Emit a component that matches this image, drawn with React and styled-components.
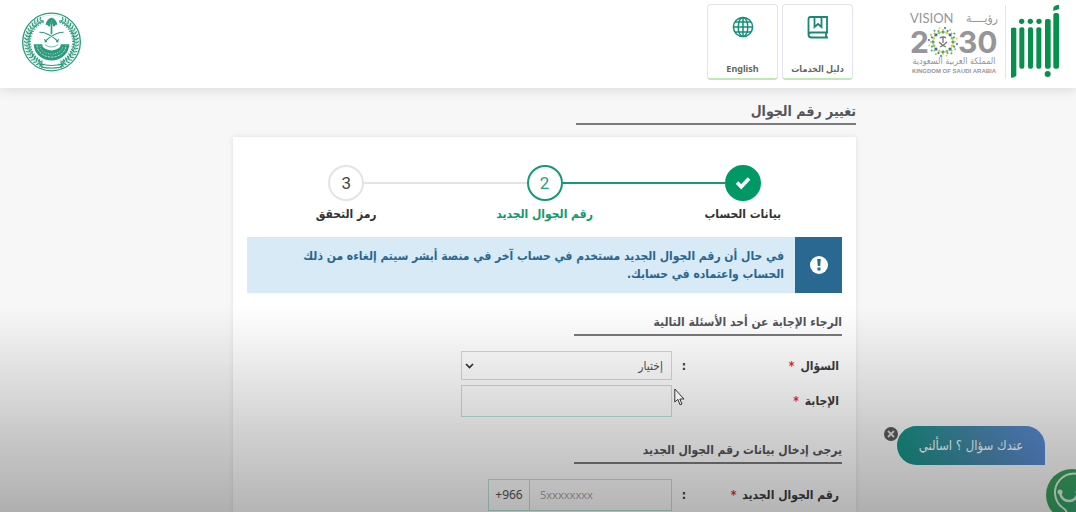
import React from "react";
import styled, { createGlobalStyle } from "styled-components";

const arabic = `"DejaVu Sans Condensed", "DejaVu Sans", sans-serif`;

const GlobalStyle = createGlobalStyle`
  *, *::before, *::after { box-sizing: border-box; }
  body {
    margin: 0;
    background: #f7f7f8;
    color: #3a3a3e;
    font-family: ${arabic};
    font-size: 12px;
    line-height: 18px;
  }
  button, input, select { font-family: inherit; }
`;

const Page = styled.div`
  display: flex;
  flex-direction: column;
  min-height: 100vh;
`;

const Header = styled.header`
  display: flex;
  align-items: flex-start;
  height: 88px;
  padding: 4px 16px 0 22px;
  background: #fff;
  box-shadow: 0 2px 12px rgba(0, 0, 0, 0.12);
  z-index: 1;
`;

const Brand = styled.a`
  display: flex;
  align-items: center;
  gap: 4px;
`;

const BrandDivider = styled.span`
  width: 1px;
  height: 74px;
  margin-inline-end: 2px;
  background: #e3e3e8;
`;

const Tiles = styled.nav`
  display: flex;
  gap: 4px;
  margin-inline-start: 56px;
`;

const Tile = styled.a`
  display: flex;
  flex-direction: column;
  align-items: center;
  justify-content: space-between;
  width: 71px;
  height: 76px;
  padding: 11px 0 1px;
  border: 1px solid #e4e4f0;
  border-bottom: 2px solid #bfe8b4;
  border-radius: 4px;
  color: #666;
  font: bold 9px/16px "Noto Sans", ${arabic};
  text-decoration: none;
  white-space: nowrap;
`;

const EmblemLink = styled.a`
  margin-inline-start: auto;
  padding-top: 8px;
`;

const Main = styled.main`
  display: flex;
  flex: 1;
  flex-direction: column;
  width: 100%;
  max-width: 636px;
  margin: 0 auto;
  padding: 14px 0 0 13px;
`;

const Heading = styled.h2`
  width: 45%;
  margin: 0;
  padding-bottom: 3px;
  border-bottom: 2px solid #7b7b7e;
  color: #55555a;
  font-size: ${(p) => (p.$large ? "14px" : "12px")};
  line-height: 18px;
  white-space: nowrap;
`;

const Card = styled.form`
  flex: 1;
  margin-top: 12px;
  padding: 28px 14px 0;
  background: #fff;
  box-shadow: 0 0 5px rgba(0, 0, 0, 0.1);
`;

const Steps = styled.ol`
  display: grid;
  grid-template-columns: repeat(3, 1fr);
  margin: 0;
  padding: 0;
  list-style: none;
`;

const stepColor = { done: "#009966", current: "#169a75", next: "#e4e4e4" };

const Step = styled.li`
  position: relative;
  display: flex;
  flex-direction: column;
  align-items: center;
  gap: 4px;
  color: ${(p) => (p.$state === "current" ? "#109a6c" : "#333")};
  font-weight: bold;

  &:not(:first-child)::before {
    content: "";
    position: absolute;
    top: 17px;
    right: calc(-50% + 18px);
    left: calc(50% + 18px);
    height: 2px;
    background: ${(p) => stepColor[p.$state]};
  }
`;

const StepMark = styled.span`
  display: flex;
  align-items: center;
  justify-content: center;
  width: 36px;
  height: 36px;
  border: 2px solid ${(p) => stepColor[p.$state]};
  border-radius: 50%;
  background: ${(p) => (p.$state === "done" ? "#009966" : "#fff")};
  color: ${(p) => (p.$state === "current" ? "#2b9d7d" : "#444")};
  font: 17px/20px Roboto, sans-serif;
`;

const Notice = styled.div`
  display: flex;
  margin-top: 14px;
  min-height: 56px;
  background: #d8eaf5;
  color: #2a6790;
  font-weight: bold;
`;

const NoticeIcon = styled.span`
  display: flex;
  flex: none;
  align-items: center;
  justify-content: center;
  width: 47px;
  background: #296890;
`;

const NoticeText = styled.p`
  flex: 1;
  margin: 0;
  padding: 10px 11px;
`;

const Section = styled.fieldset`
  display: flex;
  flex-direction: column;
  gap: 5px;
  min-width: 0;
  margin: ${(p) => (p.$spaced ? "24px" : "20px")} 0 0;
  padding: 0;
  border: 0;

  ${Heading} { margin-bottom: 10px; }
`;

const Row = styled.div`
  display: flex;
  align-items: center;
`;

const Label = styled.label`
  width: 156px;
  padding-inline-start: 3px;
  font-weight: bold;
  color: #3c3c3e;
`;

const Required = styled.span`
  margin-inline-start: 6px;
  color: #f0262c;
`;

const Colon = styled.span`
  width: 14px;
  font-weight: bold;
`;

const fieldBox = `
  border: 1px solid #bbe4dd;
  border-radius: 0;
  background: transparent;
  color: #555;
  font-size: 12px;
  outline: none;
`;

const SelectWrap = styled.div`
  position: relative;
  width: 211px;

  svg {
    position: absolute;
    top: 11px;
    left: 4px;
    pointer-events: none;
  }
`;

const Select = styled.select`
  ${fieldBox}
  display: block;
  width: 100%;
  height: 29px;
  padding: 0 8px;
  appearance: none;
`;

const Input = styled.input`
  ${fieldBox}
  width: 211px;
  height: 32px;
  padding: 0 8px;
`;

const PhoneGroup = styled.div`
  ${fieldBox}
  display: flex;
  width: 184px;
  height: 32px;
`;

const PhoneInput = styled.input`
  flex: 1;
  min-width: 0;
  padding: 0 10px;
  border: 0;
  background: transparent;
  font: 11px/18px "Noto Sans", sans-serif;
  outline: none;

  &::placeholder { color: #aaa; opacity: 1; }
`;

const DialCode = styled.span`
  display: flex;
  align-items: center;
  justify-content: center;
  width: 41px;
  border-right: 1px solid #bbe4dd;
  font: 12px/18px "Noto Sans", sans-serif;
`;

const Chat = styled.aside`
  position: fixed;
  right: 31px;
  bottom: 47px;
  z-index: 2;
`;

const ChatBubble = styled.button`
  width: 148px;
  height: 39px;
  padding: 0;
  border: 0;
  border-radius: 20px 20px 0 20px;
  background: linear-gradient(80deg, #149382, #4888ab 55%, #5a8bd6);
  color: #f4fcff;
  font-size: 13px;
`;

const ChatClose = styled.button`
  position: absolute;
  top: 1px;
  left: -13px;
  display: flex;
  align-items: center;
  justify-content: center;
  width: 14px;
  height: 14px;
  padding: 0;
  border: 0;
  border-radius: 50%;
  background: #5c5c5c;
`;

const ChatAvatar = styled.button`
  position: fixed;
  right: -22px;
  bottom: -9px;
  z-index: 2;
  width: 52px;
  height: 52px;
  padding: 0;
  border: 0;
  border-radius: 50%;
  background: linear-gradient(120deg, #3f9e54, #35a56c 60%, #4d95ad);
`;

const BottomShade = styled.div`
  position: fixed;
  inset: 60vh 0 0;
  z-index: 3;
  background: linear-gradient(rgba(0, 0, 0, 0), rgba(0, 0, 0, 0.09) 31%, rgba(0, 0, 0, 0.18) 60%, rgba(0, 0, 0, 0.29));
  pointer-events: none;
`;

const Pointer = styled.svg`
  position: fixed;
  top: 388px;
  left: 674px;
  z-index: 4;
  pointer-events: none;
`;

const AbsherLogo = () => (
  <svg width="50" height="75" viewBox="960 15 150 225" fill="#07904b" aria-hidden="true">
    <path d="M963 88q8-5 16 0v142q-7 7-16 6z" />
    <rect x="988" y="85" width="15" height="124" rx="6" />
    <rect x="1014" y="85" width="15" height="124" rx="6" />
    <rect x="1039" y="85" width="15" height="124" rx="6" />
    <rect x="1065" y="60" width="17" height="149" rx="6" />
    <rect x="1090" y="42" width="17" height="167" rx="6" />
    <circle cx="995" cy="67" r="8" />
    <circle cx="1021" cy="67" r="8" />
    <circle cx="1047" cy="67" r="8" />
    <circle cx="1073" cy="225" r="9" />
    <path d="M1090 36v-8q0-9 17-11v13z" />
  </svg>
);

const petals = Array.from({ length: 16 }, (_, i) => i * 22.5);
const petalColors = ["#4fa58a", "#e5cf3c", "#2d77a8", "#9cc44a"];

const VisionLogo = () => (
  <svg width="90" height="66" viewBox="0 0 90 66" fill="#96969a" direction="ltr" aria-hidden="true">
    <text x="1" y="14" fontFamily="Lato, sans-serif" fontSize="13">VISION</text>
    <text x="89" y="13" direction="rtl" fontFamily="DejaVu Sans Condensed, DejaVu Sans, sans-serif" fontSize="12">رؤيــــة</text>
    <g fontFamily="Inter, sans-serif" fontWeight="700" fontSize="30">
      <text x="1" y="44">2</text>
      <text x="49" y="44">30</text>
    </g>
    <g transform="translate(34 33)">
      {petals.map((a, i) => (
        <g key={a} transform={`rotate(${a})`} fill={petalColors[i % 4]}>
          <path d="M0-8l2-2-2-2-2 2z" />
          <circle cx="2" cy="-14" r="1" fill={petalColors[(i + 2) % 4]} />
          <circle cx="0" cy="-12" r="1" fill={petalColors[(i + 1) % 4]} />
        </g>
      ))}
      <circle r="8" fill="#fff" />
      <path d="M0-5v6M-3-4q3-2 6 0M-4 0q4 4 7 5M4 0q-4 4-7 5" stroke="#77777b" strokeWidth="1.3" fill="none" />
    </g>
    <text x="45" y="55" textAnchor="middle" direction="rtl" fontFamily="DejaVu Sans Condensed, DejaVu Sans, sans-serif" fontSize="9">المملكة العربية السعودية</text>
    <text x="45" y="64" textAnchor="middle" fontFamily="Liberation Sans, sans-serif" fontWeight="700" fontSize="6">KINGDOM OF SAUDI ARABIA</text>
  </svg>
);

const leaves = Array.from({ length: 19 }, (_, i) => 28 + i * 7.2);

const Wreath = () => (
  <g>
    <path d="M38-64A74 74 0 0 1 28 68" strokeWidth="1.5" />
    {leaves.map((a) => (
      <g key={a} transform={`rotate(${a})`}>
        <path d="M0-74q-5-4-6-8M0-72q-6 3-9 7" strokeWidth="3.4" />
        <path d="M-2-69q-3 4-3 8" strokeWidth="3" />
      </g>
    ))}
  </g>
);

const Emblem = () => (
  <svg width="59" height="60" viewBox="-88 -89 176 178" fill="none" stroke="#2a9b7c" aria-hidden="true">
    <circle r="86" strokeWidth="4" />
    <circle r="80" strokeWidth="1" opacity="0.5" />
    <Wreath />
    <g transform="scale(-1 1)"><Wreath /></g>
    <path d="M0-58v35" strokeWidth="5" />
    <path d="M0-60q-11-8-14 9M0-60q11-8 14 9M0-60q-6-2-8 13M0-60q6-2 8 13M-10-62Q0-76 10-62" strokeWidth="7" />
    <path d="M-36-29Q-12-30 18-3M36-29Q12-30-18-3M-22-8l8 8M22-8l-8 8M-15-2l-6 2M15-2l6 2" strokeWidth="3.5" />
    <path d="M-53 7h25a28 18 0 0 0 56 0h25a53 48 0 0 1-106 0z" fill="#2a9b7c" stroke="none" />
    <path d="M-43 10a43 35 0 0 0 86 0" stroke="#fff" strokeWidth="2" strokeDasharray="7 3" />
    <path d="M-34 12a34 24 0 0 0 68 0" stroke="#fff" strokeWidth="2" strokeDasharray="3 4" />
    <path d="M-20 8q20 14 40 0" strokeWidth="2" />
    <path d="M-36 65q36 10 72 0l-8 10q-28 5-56 0zM-20 65l-12 14M20 65l12 14" strokeWidth="3" />
  </svg>
);

const GuideIcon = () => (
  <svg width="22" height="23" viewBox="0 0 22 23" fill="none" stroke="#168873" strokeWidth="1.8" aria-hidden="true">
    <path d="M20 16.500V1H3.500Q1.500 1 1.500 3v15.500q0 3 3 3H21M21 16.500H4q-2.500 0-2.500 2.500M19 16.500v5" />
    <path d="M7.500 1v10L11 8l3.500 3V1" />
  </svg>
);

const GlobeIcon = () => (
  <svg width="22" height="22" viewBox="0 0 22 22" fill="none" stroke="#168f78" strokeWidth="1.5" aria-hidden="true">
    <circle cx="11" cy="11" r="9.600" />
    <ellipse cx="11" cy="11" rx="4.800" ry="9.600" />
    <path d="M11 1v20M1 11h20M3 6h16M3 16h16" />
  </svg>
);

const steps = [
  { label: "بيانات الحساب", state: "done" },
  { label: "رقم الجوال الجديد", state: "current", mark: "2" },
  { label: "رمز التحقق", state: "next", mark: "3" },
];

const FieldRow = ({ id, label, colon = true, children }) => (
  <Row>
    <Label htmlFor={id}>
      {label}
      <Required>*</Required>
    </Label>
    <Colon>{colon ? ":" : ""}</Colon>
    {children}
  </Row>
);

export default function App() {
  return (
    <Page dir="rtl" lang="ar">
      <GlobalStyle />
      <Header>
        <Brand href="#home" aria-label="أبشر">
          <AbsherLogo />
          <BrandDivider />
          <VisionLogo />
        </Brand>
        <Tiles>
          <Tile href="#guide">
            <GuideIcon />
            دليل الخدمات
          </Tile>
          <Tile href="#english">
            <GlobeIcon />
            English
          </Tile>
        </Tiles>
        <EmblemLink href="#ministry" aria-label="وزارة الداخلية">
          <Emblem />
        </EmblemLink>
      </Header>

      <Main>
        <Heading as="h1" $large>تغيير رقم الجوال</Heading>
        <Card>
          <Steps>
            {steps.map((s) => (
              <Step key={s.label} $state={s.state}>
                <StepMark $state={s.state}>
                  {s.mark || (
                    <svg width="16" height="14" viewBox="0 0 16 14" fill="none" stroke="#fff" strokeWidth="3.600" aria-hidden="true">
                      <path d="M2 6.500l4.200 4.300L14 2.500" />
                    </svg>
                  )}
                </StepMark>
                {s.label}
              </Step>
            ))}
          </Steps>

          <Notice role="note">
            <NoticeIcon>
              <svg width="18" height="18" viewBox="0 0 18 18" aria-hidden="true">
                <circle cx="9" cy="9" r="9" fill="#fff" />
                <path d="M7.200 3h3.600l-.6 7H7.800zM7.500 11.500h3V14.500h-3z" fill="#296890" />
              </svg>
            </NoticeIcon>
            <NoticeText>
              في حال أن رقم الجوال الجديد مستخدم في حساب آخر في منصة أبشر سيتم إلغاءه من ذلك
              <br />
              الحساب واعتماده في حسابك.
            </NoticeText>
          </Notice>

          <Section>
            <Heading>الرجاء الإجابة عن أحد الأسئلة التالية</Heading>
            <FieldRow id="question" label="السؤال">
              <SelectWrap>
                <Select id="question">
                  <option>إختيار</option>
                </Select>
                <svg width="9" height="8" viewBox="0 0 9 8" fill="none" stroke="#333" strokeWidth="1.700" aria-hidden="true">
                  <path d="M1 2l3.500 3.500L8 2" />
                </svg>
              </SelectWrap>
            </FieldRow>
            <FieldRow id="answer" label="الإجابة" colon={false}>
              <Input id="answer" type="text" />
            </FieldRow>
          </Section>

          <Section $spaced>
            <Heading>يرجى إدخال بيانات رقم الجوال الجديد</Heading>
            <FieldRow id="mobile" label="رقم الجوال الجديد">
              <PhoneGroup>
                <PhoneInput id="mobile" type="tel" dir="ltr" placeholder="5xxxxxxxx" />
                <DialCode dir="ltr">+966</DialCode>
              </PhoneGroup>
            </FieldRow>
          </Section>
        </Card>
      </Main>

      <Chat>
        <ChatBubble type="button">عندك سؤال ؟ اسألني</ChatBubble>
        <ChatClose type="button" aria-label="إغلاق">
          <svg width="8" height="8" viewBox="0 0 8 8" stroke="#ddd" strokeWidth="1.800" aria-hidden="true">
            <path d="M1 1l6 6M7 1L1 7" />
          </svg>
        </ChatClose>
      </Chat>
      <ChatAvatar type="button" aria-label="المساعد">
        <svg width="52" height="52" viewBox="0 0 52 52" fill="none" stroke="#d9f2e6" strokeWidth="2" aria-hidden="true">
          <path d="M20 46q2-4-3-7A19 19 0 1 1 39 39" />
          <path d="M14 24q2 8 9 8t9-8" strokeWidth="2.600" />
          <circle cx="14" cy="23" r="2.500" fill="#d9f2e6" stroke="none" />
          <circle cx="32" cy="23" r="2.500" fill="#d9f2e6" stroke="none" />
        </svg>
      </ChatAvatar>
      <BottomShade />
      <Pointer width="11" height="18" viewBox="0 0 11 18" fill="#eee" stroke="#333" aria-hidden="true">
        <path d="M.8 1v13l3-2.600L6 16.800l2-.8-2.200-5H10z" />
      </Pointer>
    </Page>
  );
}
